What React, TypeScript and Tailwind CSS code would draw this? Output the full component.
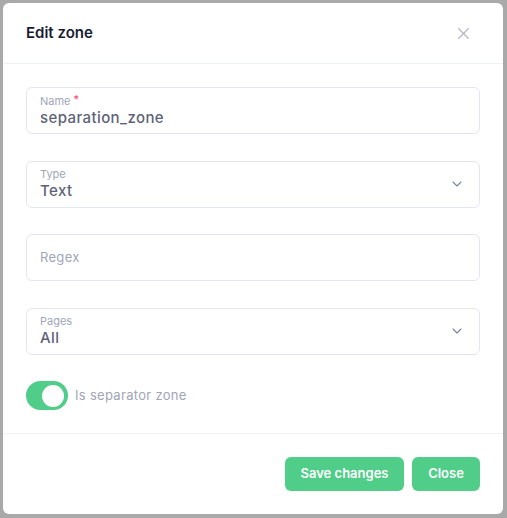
import { X, ChevronDown } from 'lucide-react';

function FloatingField({ label, value, required, select }: { label: string; value: string; required?: boolean; select?: boolean }) {
  return (
    <div className="h-[47px] rounded-md border border-[#e4e6ef] bg-white pl-[13px] pr-[14px] flex items-center">
      <div className="flex-1 pt-[1px]">
        <div className="text-[11px] leading-[13px] text-[#a1a5b7]">
          {label}
          {required && <span className="text-[#f1416c] ml-[3px] relative -top-[2px]">*</span>}
        </div>
        <div className="text-[15px] leading-[20px] font-medium tracking-[0.4px] text-[#5e6278]">{value}</div>
      </div>
      {select && <ChevronDown className="h-[16px] w-[16px] text-[#7e8299]" strokeWidth={1.6} />}
    </div>
  );
}

export default function App() {
  return (
    <div className="w-[507px] h-[518px] bg-[#a9a9a9] pl-[3px] pt-[3px]" style={{ fontFamily: 'Inter, "Open Sans", sans-serif' }}>
      <div className="w-[500px] h-[511px] rounded-md bg-white flex flex-col">
        <div className="h-[61px] shrink-0 border-b border-[#eff2f5] flex items-center justify-between pl-[23px] pr-[30px]">
          <h2 className="text-[15px] font-semibold text-[#181c32]">Edit zone</h2>
          <X className="h-[19px] w-[19px] text-[#b5b5c3]" strokeWidth={1.6} />
        </div>

        <div className="px-[23px] pt-[23px] pb-[23px] flex flex-col gap-[26.5px] border-b border-[#eff2f5]">
          <FloatingField label="Name" value="separation_zone" required />
          <FloatingField label="Type" value="Text" select />
          <div className="h-[47px] rounded-md border border-[#e4e6ef] bg-white pl-[13px] flex items-center">
            <span className="text-[13px] tracking-[0.3px] text-[#a1a5b7]">Regex</span>
          </div>
          <FloatingField label="Pages" value="All" select />
          <div className="flex items-center gap-[7px]">
            <div className="w-[42px] h-[29px] rounded-full bg-[#50cd89] flex items-center justify-end pr-[4px]">
              <div className="w-[22px] h-[22px] rounded-full bg-white" />
            </div>
            <span className="text-[13px] tracking-[0.3px] text-[#a1a5b7]">Is separator zone</span>
          </div>
        </div>

        <div className="flex-1 flex items-center justify-end gap-[8px] pr-[23px]">
          <button className="h-[34px] w-[119px] whitespace-nowrap rounded-md bg-[#50cd89] text-white text-[13px] font-semibold">Save changes</button>
          <button className="h-[34px] w-[68px] whitespace-nowrap rounded-md bg-[#50cd89] text-white text-[13px] font-semibold">Close</button>
        </div>
      </div>
    </div>
  );
}
